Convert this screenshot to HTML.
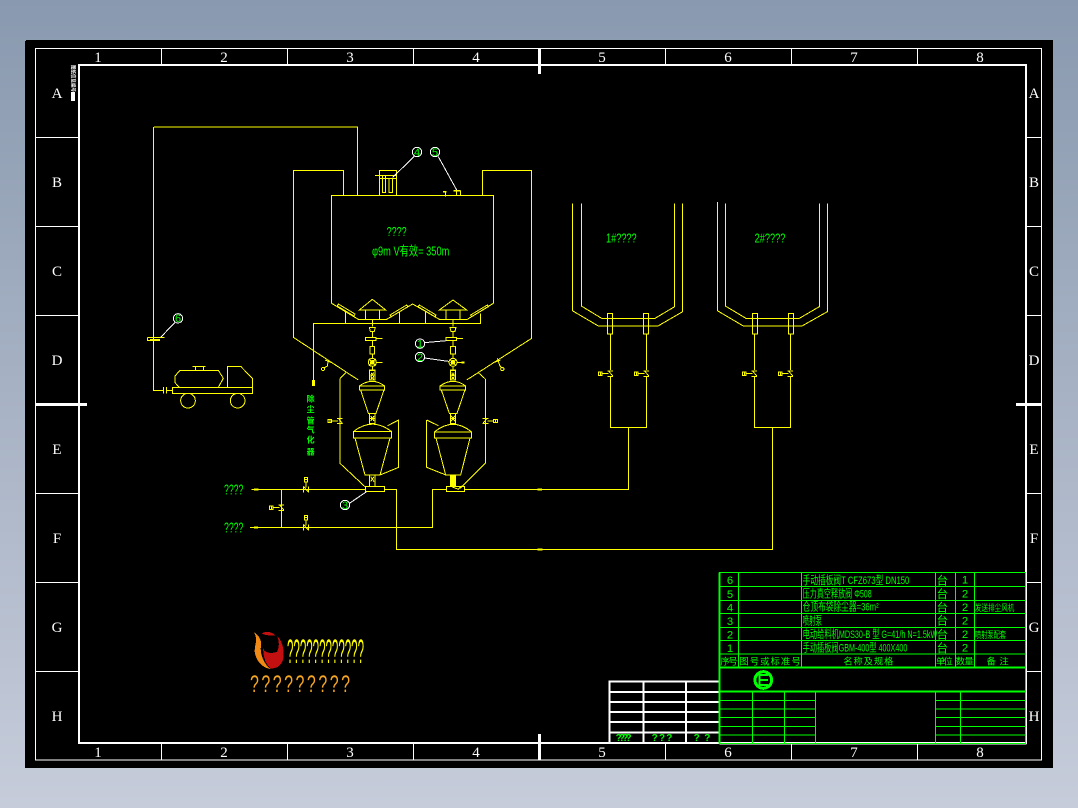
<!DOCTYPE html>
<html>
<head>
<meta charset="utf-8">
<style>
html,body{margin:0;padding:0;width:1078px;height:808px;overflow:hidden;background:linear-gradient(#8999af,#c6ccda);}
svg{position:absolute;left:0;top:0;display:block;}
text{font-family:"Liberation Sans","Noto Sans CJK SC",sans-serif;}
.y{fill:none;stroke:#ffff00;stroke-width:3;}
.w{fill:none;stroke:#fff;stroke-width:3;}
.g{fill:none;stroke:#00ff00;stroke-width:3;}
.t{fill:#00ff00;font-size:34px;}
.b text{fill:#fff;font-family:"Liberation Serif",serif;font-size:15px;text-anchor:middle;}
</style>
</head>
<body>
<svg width="1078" height="808" viewBox="0 0 1078 808" shape-rendering="crispEdges">
<defs>
  <g id="v" class="y">
    <rect x="-36" y="-5" width="11" height="10"/><path d="M-30 -5V5M-25 0H-6M-9 -8H8M-5 -8L8 8M-9 8H8"/>
  </g>
  <g id="vu" class="y">
    <rect x="-5" y="-36" width="10" height="14"/><path d="M-5 -29H5M0 -22V-6M-8 -9V9M-8 -9L8 9M8 -9V9"/>
  </g>
  <g id="stack" class="y">
    <path d="M0 538V560"/><path d="M-9 562H9L6 574H-6Z"/><path d="M0 574V592"/><rect x="-21" y="592" width="32" height="9"/><path d="M11 596H30M0 602V618"/>
    <rect x="-7" y="620" width="14" height="22"/><path d="M0 642V654"/><circle cx="0" cy="667" r="12"/><path d="M-10 657L10 677M10 657L-10 677M-5 667H5M12 667H30"/>
    <path d="M0 679V690"/><rect x="-8" y="691" width="16" height="29"/><path d="M-8 705H8M-5 710L5 718M5 710L-5 718"/>
  </g>
</defs>

<!-- black sheet -->
<rect x="25" y="41" width="1028" height="727" fill="#000"/>
<rect x="26" y="40" width="1027" height="1" fill="#000"/>

<!-- borders -->
<g fill="none" stroke="#fff" stroke-width="1">
  <rect x="35.5" y="48.5" width="1006" height="711.5"/>
  <path d="M161.5 49V65M287.5 49V65M413.5 49V65M665.5 49V65M791.5 49V65M917.5 49V65"/>
  <path d="M161.5 744V760M287.5 744V760M413.5 744V760M665.5 744V760M791.5 744V760M917.5 744V760"/>
  <path d="M36 137.5H78M36 226.5H78M36 315.5H78M36 493.5H78M36 582.5H78M36 671.5H78"/>
  <path d="M1026 137.5H1042M1026 226.5H1042M1026 315.5H1042M1026 493.5H1042M1026 582.5H1042M1026 671.5H1042"/>
</g>
<g fill="none" stroke="#fff" stroke-width="2">
  <rect x="79" y="65" width="947" height="678"/>
  <path d="M36 404.5H87M1016 404.5H1042M539.5 48V74M539.5 734V760" stroke-width="3"/>
</g>
<g class="b">
  <text x="98" y="62">1</text><text x="224" y="62">2</text><text x="350" y="62">3</text><text x="476" y="62">4</text><text x="602" y="62">5</text><text x="728" y="62">6</text><text x="854" y="62">7</text><text x="980" y="62">8</text>
  <text x="98" y="757">1</text><text x="224" y="757">2</text><text x="350" y="757">3</text><text x="476" y="757">4</text><text x="602" y="757">5</text><text x="728" y="757">6</text><text x="854" y="757">7</text><text x="980" y="757">8</text>
  <text x="57" y="98">A</text><text x="57" y="187">B</text><text x="57" y="276">C</text><text x="57" y="365">D</text><text x="57" y="454">E</text><text x="57" y="543">F</text><text x="57" y="632">G</text><text x="57" y="721">H</text>
  <text x="1034" y="98">A</text><text x="1034" y="187">B</text><text x="1034" y="276">C</text><text x="1034" y="365">D</text><text x="1034" y="454">E</text><text x="1034" y="543">F</text><text x="1034" y="632">G</text><text x="1034" y="721">H</text>
</g>
<text transform="translate(71,65) rotate(90)" fill="#fff" font-size="5" font-weight="bold" textLength="27" lengthAdjust="spacingAndGlyphs" y="-0.5">图纸信息编号</text>
<rect x="71" y="92" width="4" height="9" fill="#fff"/>

<!-- silo top, zoom coordinates -->
<g transform="translate(280,140) scale(0.33333)">
  <path class="y" d="M155 490V166H640V490L562 538H478L398 492L320 538H235Z"/>
  <path class="y" d="M-378 -39H232V166" />
  <path class="y" d="M191 166V91H40V592L235 720M607 166V91H755V595L560 720"/>
  <path class="y" d="M175 492L225 522L222 528L172 498ZM330 525L380 495L384 500L334 530ZM418 495L468 525L465 530L414 500ZM572 525L622 495L625 500L575 530Z"/>
  <path class="y" d="M238 510L277 478L317 510ZM256 510V538M298 510V538M478 510L519 480L560 510ZM498 510V538M540 510V538"/>
  <path class="y" d="M100 720V550H601V520M196 515V550M358 515V550M436 515V550"/>
  <use href="#stack" x="277"/><use href="#stack" x="519"/>
  <path class="y" d="M298 166V91H350V166M285 106H350M298 116H350M307 106V158H317V106M327 116V158H337V116"/>
  <path class="y" d="M520 153H542V166M530 153V166M489 155H500M496 155V170"/>
  <path d="M489 153h11v5h-11zM520 150h22v5h-22z" fill="#ff0"/>
  <path class="y" d="M135 660L155 668M145 660L142 678L130 685"/><circle class="y" cx="129" cy="687" r="5"/>
  <path class="y" d="M640 668L662 660M652 655L660 678L668 685"/><circle class="y" cx="667" cy="687" r="5"/>
  <circle cx="277" cy="667" r="7" fill="#ff0"/><circle cx="519" cy="667" r="7" fill="#ff0"/>
  <rect x="545" y="664" width="9" height="7" fill="#ff0"/>
  <g class="w">
    <circle cx="411" cy="36" r="14"/><path d="M404 48L338 112"/>
    <circle cx="465" cy="36" r="14"/><path d="M475 50L530 150"/>
    <circle cx="420" cy="611" r="14"/><path d="M434 608L500 602"/>
    <circle cx="420" cy="651" r="14"/><path d="M434 654L505 664"/>
  </g>
  <text class="t" x="411" y="48" text-anchor="middle">4</text>
  <text class="t" x="465" y="48" text-anchor="middle">5</text>
  <text class="t" x="420" y="623" text-anchor="middle">1</text>
  <text class="t" x="420" y="663" text-anchor="middle">2</text>
  <text class="t" style="font-size:38px" x="320" y="288" textLength="60" lengthAdjust="spacingAndGlyphs">????</text>
  <text class="t" style="font-size:40px" x="276" y="346" textLength="232" lengthAdjust="spacingAndGlyphs">φ9m  V有效= 350m</text>
</g>

<!-- lower vessels -->
<g transform="translate(210,360) scale(0.33333)">
  <g class="y">
    <path d="M310 0V60"/><rect x="307" y="62" width="6" height="14" fill="#ff0"/>
    <path d="M448 78Q487 50 524 78M448 78H524V90H448ZM452 90L475 160H498L522 90"/>
    <rect x="479" y="160" width="16" height="30"/><path d="M479 175H495M482 168L492 183M492 168L482 183M479 30H495V60H479ZM483 38L491 50M491 38L483 50"/>
    <path d="M430 215Q487 170 545 215M430 215H545V234H430ZM435 234L465 345H510L540 234"/>
    <rect x="479" y="345" width="16" height="35"/><path d="M482 350L492 365M492 350L482 365"/>
    <rect x="467" y="380" width="57" height="15"/>
    <path d="M390 55V310L467 382M390 55L408 38"/>
    <path d="M533 197L566 180V322L510 345"/>
    <path d="M690 78Q729 50 767 78M690 78H767V90H690ZM694 90L718 160H741L765 90"/>
    <rect x="721" y="160" width="16" height="30"/><path d="M721 175H737M724 168L734 183M734 168L724 183M721 30H737V60H721ZM725 38L733 50M733 38L725 50"/>
    <path d="M673 216Q729 170 785 216M673 216H785V234H673ZM678 234L707 345H752L780 234"/>
    <rect x="721" y="345" width="16" height="35" fill="#ff0"/>
    <rect x="709" y="380" width="55" height="15"/>
    <path d="M725 380L745 388L755 378"/>
    <path d="M650 180V322L708 345M650 180L685 197"/>
    <path d="M826 57V310L750 385M826 57L805 38"/>
    <path d="M124 388H467M524 388H559V568H1020M120 502H667V388H709M764 388H1020M214 388V502"/>
  </g>
  <path d="M132 385h14v6h-14zM132 499h12v6h-12zM982 385h14v6h-14zM982 565h16v6h-16z" fill="#ff0"/>
  <use href="#v" x="390" y="183"/>
  <use href="#v" transform="translate(826,183) scale(-1,1)"/>
  <use href="#v" x="214" y="443"/>
  <use href="#vu" x="288" y="388"/>
  <use href="#vu" x="288" y="502"/>
  <circle class="w" cx="405" cy="435" r="14"/><path class="w" d="M418 430L470 395"/>
  <text class="t" x="405" y="447" text-anchor="middle">3</text>
  <g class="t" style="font-size:44px">
    <text x="42" y="403" textLength="58" lengthAdjust="spacingAndGlyphs">????</text>
    <text x="42" y="517" textLength="58" lengthAdjust="spacingAndGlyphs">????</text>
  </g>
  <g class="t" text-anchor="middle" style="font-size:24px;font-weight:bold">
    <text x="302" y="124">除</text><text x="302" y="156">尘</text><text x="302" y="190">管</text><text x="302" y="217">气</text><text x="302" y="248">化</text><text x="302" y="284">器</text>
  </g>
</g>

<!-- truck -->
<g transform="translate(140,300) scale(0.33333)" class="y">
  <path d="M40 -519V271H70M70 261V280M80 261V280M80 271H97"/>
  <rect x="97" y="262" width="240" height="19"/>
  <path d="M120 211H235L250 235L235 262M120 211L105 228V248L118 262M157 199H197M167 199V211M190 199V211"/>
  <path d="M262 262V199H302L337 235V262"/>
  <circle cx="144" cy="302" r="22"/><circle cx="293" cy="302" r="22"/>
  <path d="M22 112H74M22 112V122H60M30 118H60"/>
  <circle class="w" cx="114" cy="55" r="14"/><path class="w" d="M104 68L62 112"/>
</g>
<text x="178" y="322" fill="#0f0" font-size="11" text-anchor="middle">6</text>

<!-- tanks -->
<g transform="translate(560,190) scale(0.33333)">
  <g class="y">
    <path d="M37 40V362L115 408H294L368 365V40M64 40V348L125 385H285L344 350V40"/>
    <rect x="142" y="370" width="16" height="62"/><rect x="250" y="370" width="16" height="62"/>
    <path d="M151 432V712H260V432M205 712V900"/>
    <path d="M472 36V362L550 408H726L802 365V40M496 40V348L558 385H718L778 350V40"/>
    <rect x="577" y="370" width="16" height="62"/><rect x="685" y="370" width="16" height="62"/>
    <path d="M583 432V712H691V432M637 712V1077"/>
  </g>
  <rect x="150" y="540" width="3" height="20" fill="#000"/><rect x="258" y="540" width="3" height="20" fill="#000"/><rect x="582" y="540" width="3" height="20" fill="#000"/><rect x="690" y="540" width="3" height="20" fill="#000"/>
  <use href="#v" x="151" y="551"/><use href="#v" x="259" y="551"/><use href="#v" x="583" y="551"/><use href="#v" x="691" y="551"/>
  <g class="t" style="font-size:40px">
    <text x="138" y="158" textLength="92" lengthAdjust="spacingAndGlyphs">1#????</text>
    <text x="584" y="158" textLength="92" lengthAdjust="spacingAndGlyphs">2#????</text>
  </g>
</g>
<path d="M628.5 428V489.5H540M772.5 428V549.5H540" fill="none" stroke="#ff0"/>

<!-- title block -->
<g transform="translate(600,565) scale(0.33333)">
  <g fill="none" stroke="#fff" stroke-width="6">
    <path d="M29 535V350H358M29 381H358M29 411H358M29 441H358M29 471H358M29 502H358M131 350V535M258 350V535"/>
  </g>
  <path class="w" style="stroke-width:6" d="M358 535H1280"/>
  <g class="g" style="stroke-width:3">
    <path d="M358 22H1276V535H358ZM358 64H1276M358 106H1276M358 146H1276M358 187H1276M358 227H1276M358 267H1276"/>
    <path d="M415 22V308M604 22V308M1006 22V308M1066 22V308M1123 22V308"/>
    <path d="M358 406H646M358 432H646M358 458H646M358 484H646M358 510H646M1006 406H1276M1006 432H1276M1006 458H1276M1006 484H1276M1006 510H1276"/>
    <path d="M457 380V535M553 380V535M646 380V535M1006 380V535M1081 380V535"/>
  </g>
  <path d="M358 308H1276M358 380H1276" class="g" style="stroke-width:6"/>
  <path d="M359 22V535" class="g" style="stroke-width:6"/>
  <circle cx="490" cy="345" r="25" class="g" style="stroke-width:9"/>
  <path d="M478 330H504M478 345H504M478 360H504M478 328V362" class="g" style="stroke-width:6"/>
  <g class="t">
    <text x="390" y="57" text-anchor="middle">6</text><text x="390" y="99" text-anchor="middle">5</text><text x="390" y="139" text-anchor="middle">4</text><text x="390" y="180" text-anchor="middle">3</text><text x="390" y="221" text-anchor="middle">2</text><text x="390" y="261" text-anchor="middle">1</text>
    <text x="608" y="57" textLength="320" lengthAdjust="spacingAndGlyphs">手动插板阀T  CFZ673型 DN150</text>
    <text x="608" y="98" textLength="207" lengthAdjust="spacingAndGlyphs">压力真空释放阀 Φ508</text>
    <text x="608" y="136" textLength="228" lengthAdjust="spacingAndGlyphs">仓顶布袋除尘器=36m²</text>
    <text x="608" y="178" textLength="58" lengthAdjust="spacingAndGlyphs">喷射泵</text>
    <text x="608" y="219" textLength="404" lengthAdjust="spacingAndGlyphs">电动给料机MDS30-B 型 G=41/h N=1.5kW</text>
    <text x="608" y="260" textLength="314" lengthAdjust="spacingAndGlyphs">手动插板阀GBM-400型 400X400</text>
    <text x="1027" y="58" text-anchor="middle">台</text><text x="1027" y="99" text-anchor="middle">台</text><text x="1027" y="139" text-anchor="middle">台</text><text x="1027" y="179" text-anchor="middle">台</text><text x="1027" y="220" text-anchor="middle">台</text><text x="1027" y="261" text-anchor="middle">台</text>
    <text x="1095" y="56" text-anchor="middle">1</text><text x="1095" y="98" text-anchor="middle">2</text><text x="1095" y="138" text-anchor="middle">2</text><text x="1095" y="178" text-anchor="middle">2</text><text x="1095" y="219" text-anchor="middle">2</text><text x="1095" y="260" text-anchor="middle">2</text>
    <text x="1125" y="138" textLength="118" lengthAdjust="spacingAndGlyphs" style="font-size:28px">发送排尘风机</text>
    <text x="1125" y="219" textLength="93" lengthAdjust="spacingAndGlyphs" style="font-size:28px">喷射泵配套</text>
    <g style="font-size:28px">
      <text x="361" y="299" textLength="52" lengthAdjust="spacing">序 号</text>
      <text x="418" y="299" textLength="184" lengthAdjust="spacing">图号或标准号</text>
      <text x="730" y="299" textLength="150" lengthAdjust="spacing">名称及规格</text>
      <text x="1008" y="299" textLength="50" lengthAdjust="spacing">单位</text>
      <text x="1067" y="299" textLength="54" lengthAdjust="spacing">数量</text>
      <text x="1160" y="299" textLength="66" lengthAdjust="spacing">备 注</text>
    </g>
    <g style="font-size:30px;font-weight:bold">
      <text x="47" y="528" textLength="48" lengthAdjust="spacing">????</text>
      <text x="155" y="528" textLength="62" lengthAdjust="spacing">???</text>
      <text x="281" y="528" textLength="50" lengthAdjust="spacing">??</text>
    </g>
  </g>
</g>

<!-- logo -->
<g transform="translate(240,620) scale(0.33333)">
  <path d="M42 37C55 45 68 60 62 85C62 110 75 135 92 147C70 145 48 125 44 95C43 75 55 60 42 37Z" fill="#f18a14"/>
  <path d="M65 40C80 32 95 35 106 46C92 46 78 48 65 40Z" fill="#c1100f"/>
  <path d="M112 48C125 60 133 85 131 110C128 135 110 147 92 145C78 135 70 115 69 85C75 100 95 102 112 95C118 80 118 65 112 48Z" fill="#c1100f"/>
</g>
<text transform="translate(287,663) scale(1,3)" fill="#ffff00" font-size="11.5" textLength="77" lengthAdjust="spacing" x="0" y="0">????????????</text>
<text transform="translate(250,692) scale(1,1.5)" fill="#f5a623" font-size="16" textLength="100" lengthAdjust="spacing" x="0" y="0">?????????</text>
</svg>
</body>
</html>
